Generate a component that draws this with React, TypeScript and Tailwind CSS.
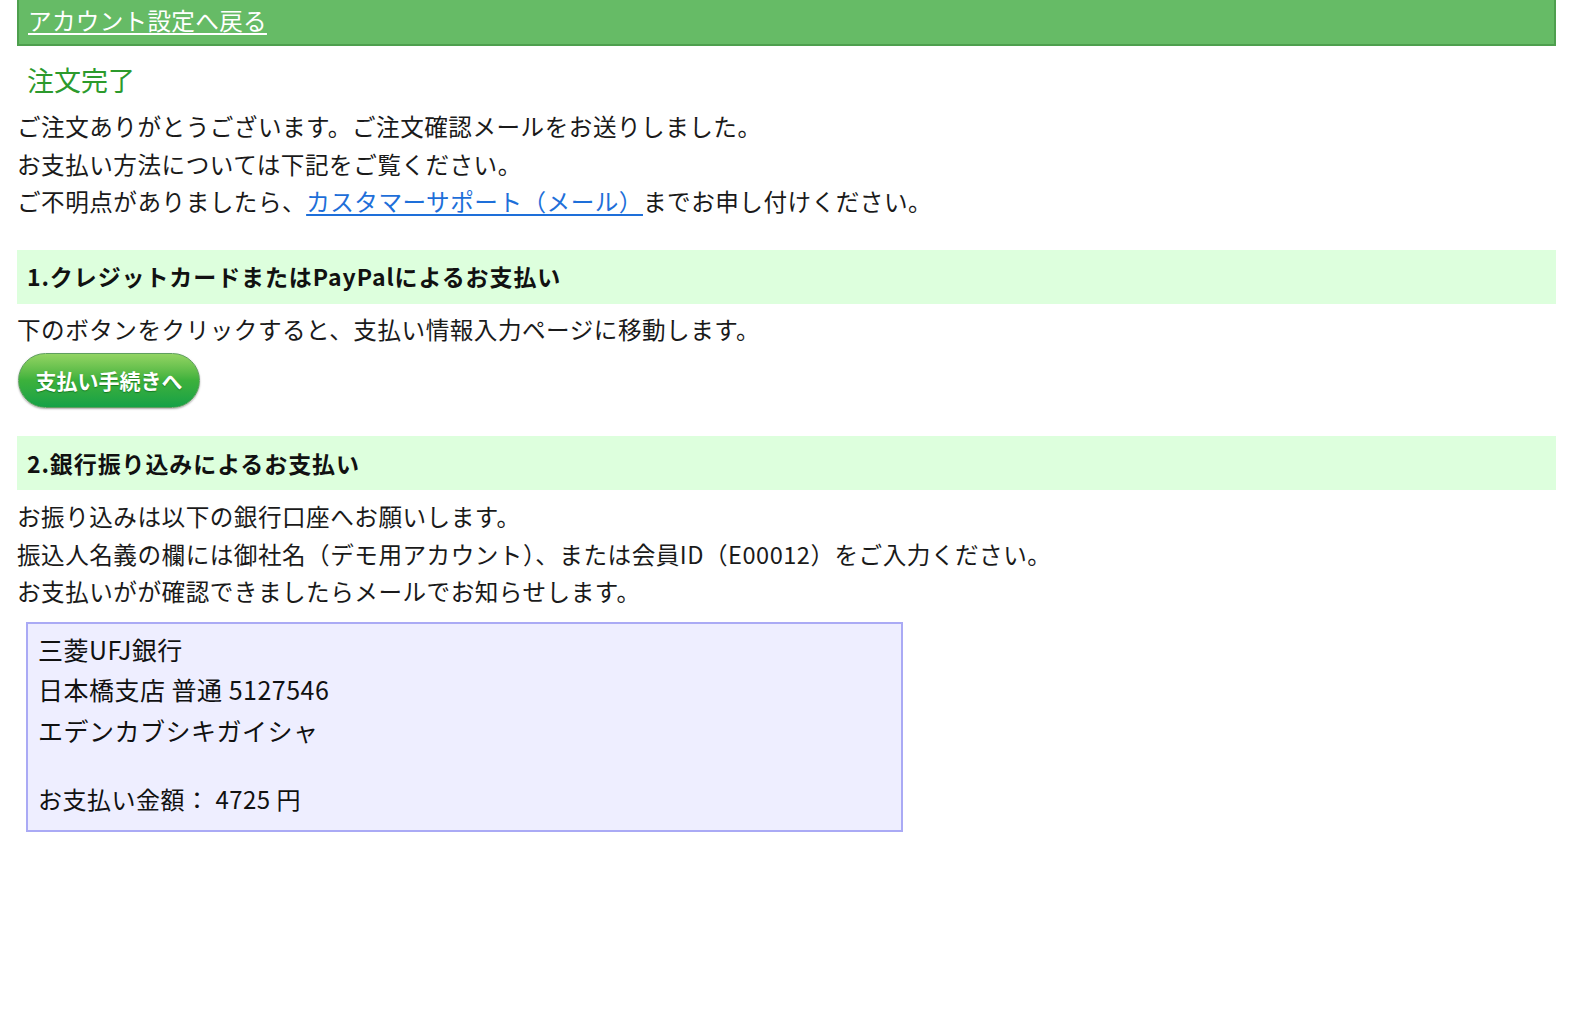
import React from 'react';

const font = { fontFamily: '"Noto Sans CJK JP", "Noto Sans", sans-serif' };

const SectionHeading: React.FC<{ children: React.ReactNode; className?: string }> = ({ children, className }) => (
  <div className={`h-[54px] bg-[#ddffdd] pl-[10px] flex items-center text-[23px] font-bold tracking-[0.9px] text-[#111] ${className ?? ''}`}>
    {children}
  </div>
);

export default function App() {
  return (
    <div className="min-h-screen bg-white text-[#1a1a1a] pl-[17px] pr-[18px]" style={font}>
      <div className="h-[46px] bg-[#66bb66] border-l-2 border-r-2 border-b-2 border-[#4e9f4e] pl-[9px] flex items-start">
        <a href="#" className="text-white text-[23.6px] leading-[40px] tracking-[0.3px] underline underline-offset-[3px]">
          アカウント設定へ戻る
        </a>
      </div>

      <h1 className="mt-[16px] pl-[10px] text-[27px] leading-[36px] text-[#2c9a2c] font-normal">注文完了</h1>

      <div className="mt-[10px] text-[23.6px] leading-[37.5px] tracking-[0.5px]">
        <p>ご注文ありがとうございます。ご注文確認メールをお送りしました。</p>
        <p>お支払い方法については下記をご覧ください。</p>
        <p>
          ご不明点がありましたら、
          <a href="#" className="text-[#1e6fd9] underline underline-offset-[3px]">カスタマーサポート（メール）</a>
          までお申し付けください。
        </p>
      </div>

      <SectionHeading className="mt-[29px]">1.クレジットカードまたはPayPalによるお支払い</SectionHeading>

      <p className="mt-[7px] text-[23.6px] leading-[37.5px] tracking-[0.5px]">
        下のボタンをクリックすると、支払い情報入力ページに移動します。
      </p>

      <button className="mt-[5px] ml-[1px] w-[182px] h-[55px] rounded-full border border-[#5f9f5f] bg-gradient-to-b from-[#92d463] via-[#3cb13c] to-[#12a146] shadow-[0_1px_2px_rgba(0,0,0,0.35)] text-white text-[21px] font-bold flex items-center justify-center [text-shadow:0_1px_1px_rgba(0,80,0,0.5)]">
        支払い手続きへ
      </button>

      <SectionHeading className="mt-[28px]">2.銀行振り込みによるお支払い</SectionHeading>

      <div className="mt-[8px] text-[23.6px] leading-[37.5px] tracking-[0.5px]">
        <p>お振り込みは以下の銀行口座へお願いします。</p>
        <p>振込人名義の欄には御社名（デモ用アカウント）、または会員ID（E00012）をご入力ください。</p>
        <p>お支払いがが確認できましたらメールでお知らせします。</p>
      </div>

      <div className="mt-[11px] ml-[9px] w-[877px] bg-[#eeeeff] border-2 border-[#aaaaf5] pl-[10px] pt-[5px] pb-[10px] text-[25px] leading-[40.5px] tracking-[0.5px] text-[#111]">
        <p>三菱UFJ銀行</p>
        <p>日本橋支店 普通 5127546</p>
        <p>エデンカブシキガイシャ</p>
        <p className="mt-[29px] text-[24px]">お支払い金額： 4725 円</p>
      </div>
    </div>
  );
}
